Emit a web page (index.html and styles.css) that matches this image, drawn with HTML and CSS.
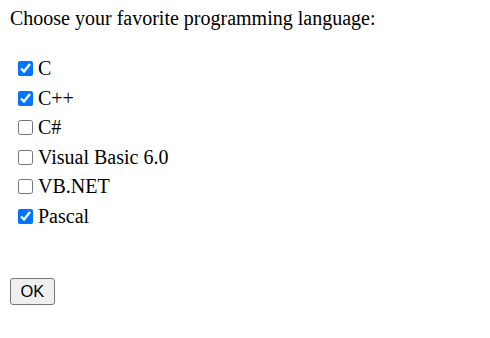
FILE: index.html
```html
<!DOCTYPE html>
<html>
<head>
<meta charset="utf-8">
<link rel="stylesheet" href="styles.css">
</head>
<body>
<div class="page">
  <p class="title">Choose your favorite programming language:</p>
  <div class="options">
    <label class="option"><input type="checkbox" checked><span>C</span></label>
    <label class="option"><input type="checkbox" checked><span>C++</span></label>
    <label class="option"><input type="checkbox"><span>C#</span></label>
    <label class="option"><input type="checkbox"><span>Visual Basic 6.0</span></label>
    <label class="option"><input type="checkbox"><span>VB.NET</span></label>
    <label class="option"><input type="checkbox" checked><span>Pascal</span></label>
  </div>
  <button class="ok" type="button">OK</button>
</div>
</body>
</html>
```

FILE: styles.css
```css
html, body {
  margin: 0;
  padding: 0;
  background: #ffffff;
}

.page {
  padding: 7px 10px;
  font-family: "Liberation Serif", "Times New Roman", serif;
  font-size: 20px;
  color: #000000;
  display: flex;
  flex-direction: column;
  align-items: flex-start;
}

.title {
  margin: 0;
  line-height: 23px;
}

.options {
  margin-top: 23.75px;
  display: flex;
  flex-direction: column;
}

.option {
  height: 29.5px;
  display: flex;
  align-items: center;
  padding-left: 8px;
}

.option input {
  width: 15px;
  height: 15px;
  margin: 0 5px 0 0;
}

.ok {
  margin-top: 47px;
  font-family: "Liberation Sans", Arial, sans-serif;
  font-size: 16.5px;
  line-height: 18px;
  padding: 3.5px 9.5px;
  background: #efefef;
  border: 1px solid #767676;
  border-radius: 3px;
  color: #000000;
}
```
